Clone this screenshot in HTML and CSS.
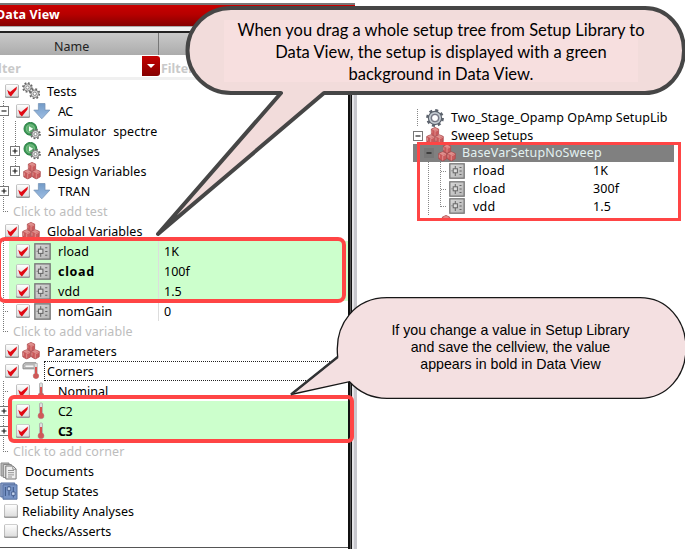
FILE: index.html
```html
<!DOCTYPE html>
<html lang="en">
<head>
<meta charset="utf-8">
<title>Data View</title>
<link rel="stylesheet" href="styles.css">
</head>
<body>
<svg class="defs" width="0" height="0" aria-hidden="true">
  <defs>
    <linearGradient id="box" x2="0" y2="1"><stop stop-color="#fff"/><stop offset="1" stop-color="#ddd"/></linearGradient>
    <linearGradient id="blue" x2="0" y2="1"><stop stop-color="#739bc7"/><stop offset="1" stop-color="#9dbde3"/></linearGradient>
    <linearGradient id="metal" x2="1" y2="1"><stop stop-color="#d8d8d8"/><stop offset="1" stop-color="#b4b4b4"/></linearGradient>
    <symbol id="off" viewBox="0 0 16 16"><rect x="1" y="1.5" width="14" height="13.5" rx="1.5" fill="#999"/><rect x="1.6" y="1.5" width="12.6" height="12" rx="1" fill="url(#box)" stroke="#c0c0c0" stroke-width=".6"/></symbol>
    <symbol id="on" viewBox="0 0 16 16"><use href="#off"/><path d="M3.2 6.7 6.1 9.1 12.9 3.6 12.5 6.4 6.9 13.4 4.6 11.2Z" fill="#e10a14"/></symbol>
    <symbol id="cube" viewBox="0 0 8 9"><path d="M4 .4 7.5 2 7.4 6.7 4 8.6.6 6.7.5 2Z" fill="#c9595b" stroke="#a94a4c" stroke-width=".7"/><path d="M4 .7 7 2.1 4 3.6 1 2.1Z" fill="#df8f8d"/><path d="M4 3.7V8M1.1 3v2.7M4.3 4 7 2.8" stroke="#e59c99" stroke-width=".7" fill="none"/></symbol>
    <symbol id="cubes" viewBox="0 0 18 18"><use href="#cube" x="4.5" y="0" width="9" height="9.800"/><use href="#cube" x="0" y="7.2" width="9.400" height="10.300"/><use href="#cube" x="8.6" y="7.2" width="9.400" height="10.300"/></symbol>
    <symbol id="arrow" viewBox="0 0 18 18"><path d="M5.400 1.500h6.600v6.600h4.900L8.800 16.800.8 8.100H5.400Z" fill="url(#blue)" stroke="#7896b7" stroke-width=".8"/></symbol>
    <symbol id="gear" viewBox="0 0 18 18"><circle cx="9" cy="9" r="7.4" fill="none" stroke="#5c636d" stroke-width="3" stroke-dasharray="2.9 2.91"/><circle cx="9" cy="9" r="5.2" fill="none" stroke="#5c636d" stroke-width="4"/><circle cx="9" cy="9" r="5.2" fill="none" stroke="#c3cad1" stroke-width="1.700"/><circle cx="9" cy="9" r="3.5" fill="#fff" stroke="#667" stroke-width=".9"/></symbol>
    <symbol id="cog" viewBox="0 0 11 11"><circle cx="5.5" cy="5.5" r="4.5" fill="none" stroke="#666" stroke-width="1.7" stroke-dasharray="1.76 1.77"/><circle cx="5.5" cy="5.5" r="3.6" fill="#ddd" stroke="#777" stroke-width=".9"/><circle cx="5.5" cy="5.5" r="1.6" fill="#fff" stroke="#777" stroke-width=".8"/></symbol>
    <symbol id="gears" viewBox="0 0 18 18"><use href="#cog" x="0" y="0" width="11" height="11"/><use href="#cog" x="7" y="6" width="11.5" height="11.5"/></symbol>
    <symbol id="run" viewBox="0 0 18 18"><circle cx="7.4" cy="6.8" r="6.4" fill="#3d9855" stroke="#277e43"/><circle cx="7.4" cy="6.8" r="4.1" fill="#60b071" stroke="#98cfa1" stroke-width=".6"/><path d="M6 4.2v5.3l4.1-2.7Z" fill="#f4fff4"/><use href="#cog" x="7" y="6.6" width="11" height="11"/></symbol>
    <symbol id="var" viewBox="0 0 16 16"><rect x=".8" y=".8" width="14.4" height="14.4" fill="url(#metal)" stroke="#777" stroke-width="1.3"/><path d="M6.3 3v10" stroke="#666"/><rect x="4.200" y="5.8" width="4.200" height="4" fill="#ddd" stroke="#666"/><path d="M10.5 4.5h2M10.5 8h2.2M10.5 11.5h2M2.5 7.8h1" stroke="#666"/></symbol>
    <symbol id="temp" viewBox="0 0 18 18"><path d="M6.500 1.5Q8 .1 9.500 1.5V11Q11.700 13 10.700 15.500 8 18.200 5.300 15.500 4.300 13 6.500 11Z" fill="#ddd" stroke="#aaa" stroke-width=".8"/><path d="M8 5v8" stroke="#d85250" stroke-width="2"/><circle cx="8" cy="13.700" r="2.900" fill="#ce5958"/></symbol>
    <symbol id="corner" viewBox="0 0 18 18"><path d="M1 2.5 3 .8h11v6H1Z" fill="#c5c5c5" stroke="#888"/><path d="M3 3h9v2.5H3Z" fill="#f5f5f5" stroke="#999" stroke-width=".6"/><path d="M12.4 1.5h3v9.7q2 2 .8 4.2-2.2 2.2-4.6 0-1.2-2.2.8-4.2Z" fill="#ddd" stroke="#aaa" stroke-width=".6"/><path d="M14 5v9" stroke="#d85250" stroke-width="2"/><circle cx="14" cy="14" r="2.8" fill="#ce5958"/></symbol>
    <symbol id="docs" viewBox="0 0 18 18"><path d="M1 1h8v13H1Z" fill="#bbb" stroke="#888"/><path d="M3.3 2.5h8v13h-8Z" fill="#ddd" stroke="#888"/><path d="M5.8 4h7.3l3 3v10H5.8Z" fill="#eee" stroke="#777"/><path d="M12.8 4.2V7.3H16M8 8.5h6M8 10.7h6M8 12.9h6M8 15h4" fill="none" stroke="#888" stroke-width=".9"/></symbol>
    <symbol id="states" viewBox="0 0 18 18"><path d="M.8 1h14v14H.8Z" fill="#8fa4cd" stroke="#506b9d"/><path d="M3 2.800h14v14.4H3Z" fill="#7894c6" stroke="#57709f"/><path d="M5.4 5v9M9 4v9.5M13.3 5v10.5" stroke="#375080" stroke-width=".9"/><path d="M7.3 5h3.4v3.4H7.3ZM11.6 10h3.4v3.4h-3.4Z" fill="#c8d7f0" stroke="#3d5687" stroke-width=".8"/></symbol>
    <symbol id="plus" viewBox="0 0 10 10"><rect x=".5" y=".5" width="9" height="9" fill="#fff" stroke="#777"/><path d="M2.5 5h5M5 2.5v5" stroke="#111" stroke-width="1.1"/></symbol>
    <symbol id="minus" viewBox="0 0 10 10"><rect x=".5" y=".5" width="9" height="9" fill="inherit" stroke="#777"/><path d="M2.5 5h5" stroke="#111" stroke-width="1.1"/></symbol>
  </defs>
</svg>
<main class="stage">
  <section class="panel">
    <header class="title">Data View</header>
    <div class="groove"></div>
    <div class="columns"><span class="name">Name</span><span></span></div>
    <div class="filters"><span class="filter-name">Filter</span><span class="drop"></span><span class="filter-value">Filter</span></div>
    <div class="tree">
      <div class="row top"><svg class="check"><use href="#on"/></svg><svg class="icon"><use href="#gears"/></svg><span class="label">Tests</span></div>
      <div class="group">
        <div class="row child"><svg class="expander"><use href="#minus"/></svg><svg class="check"><use href="#on"/></svg><svg class="icon"><use href="#arrow"/></svg><span class="label tight">AC</span></div>
        <div class="row grand leaf"><svg class="icon"><use href="#run"/></svg><span class="label sim">Simulator&nbsp; spectre</span></div>
        <div class="row grand"><svg class="expander"><use href="#plus"/></svg><svg class="icon"><use href="#run"/></svg><span class="label">Analyses</span></div>
        <div class="row grand last"><svg class="expander"><use href="#plus"/></svg><svg class="icon"><use href="#cubes"/></svg><span class="label">Design Variables</span></div>
        <div class="row child"><svg class="expander"><use href="#plus"/></svg><svg class="check"><use href="#on"/></svg><svg class="icon"><use href="#arrow"/></svg><span class="label">TRAN</span></div>
        <div class="row hint">Click to add test</div>
      </div>
      <div class="row top"><svg class="check"><use href="#on"/></svg><svg class="icon"><use href="#cubes"/></svg><span class="label">Global Variables</span></div>
      <div class="group">
        <div class="row child leaf green"><svg class="check"><use href="#on"/></svg><svg class="icon var"><use href="#var"/></svg><span class="label">rload</span><span class="value">1K</span></div>
        <div class="row child leaf green"><svg class="check"><use href="#on"/></svg><svg class="icon var"><use href="#var"/></svg><b class="label wide">cload</b><span class="value">100f</span></div>
        <div class="row child leaf green"><svg class="check"><use href="#on"/></svg><svg class="icon var"><use href="#var"/></svg><span class="label">vdd</span><span class="value">1.5</span></div>
        <div class="row child leaf"><svg class="check"><use href="#on"/></svg><svg class="icon var"><use href="#var"/></svg><span class="label">nomGain</span><span class="value">0</span></div>
        <div class="row hint">Click to add variable</div>
      </div>
      <div class="row top"><svg class="check"><use href="#on"/></svg><svg class="icon"><use href="#cubes"/></svg><span class="label wide">Parameters</span></div>
      <div class="row top focus"><svg class="check"><use href="#on"/></svg><svg class="icon"><use href="#corner"/></svg><span class="label">Corners</span></div>
      <div class="group">
        <div class="row child leaf"><svg class="check"><use href="#on"/></svg><svg class="icon"><use href="#temp"/></svg><span class="label">Nominal</span></div>
        <div class="row child green"><svg class="expander"><use href="#plus"/></svg><svg class="check"><use href="#on"/></svg><svg class="icon"><use href="#temp"/></svg><span class="label tight">C2</span></div>
        <div class="row child green"><svg class="expander"><use href="#plus"/></svg><svg class="check"><use href="#on"/></svg><svg class="icon"><use href="#temp"/></svg><b class="label tight">C3</b></div>
        <div class="row hint">Click to add corner</div>
      </div>
      <div class="row plain"><svg class="icon"><use href="#docs"/></svg><span class="label wide">Documents</span></div>
      <div class="row plain"><svg class="icon"><use href="#states"/></svg><span class="label">Setup States</span></div>
      <div class="row option"><svg class="check"><use href="#off"/></svg><span class="label">Reliability Analyses</span></div>
      <div class="row option"><svg class="check"><use href="#off"/></svg><span class="label">Checks/Asserts</span></div>
    </div>
  </section>

  <section class="library">
    <div class="lib-row root"><svg class="icon"><use href="#gear"/></svg><span>Two_Stage_Opamp OpAmp SetupLib</span></div>
    <div class="lib-row sweep"><svg class="expander"><use href="#minus"/></svg><svg class="icon"><use href="#cubes"/></svg><span>Sweep Setups</span></div>
    <div class="lib-row selected"><svg class="expander"><use href="#minus"/></svg><svg class="icon"><use href="#cubes"/></svg><span>BaseVarSetupNoSweep</span></div>
    <div class="lib-items">
      <div class="lib-row item"><svg class="icon var"><use href="#var"/></svg><span class="key">rload</span><span>1K</span></div>
      <div class="lib-row item"><svg class="icon var"><use href="#var"/></svg><span class="key">cload</span><span>300f</span></div>
      <div class="lib-row item"><svg class="icon var"><use href="#var"/></svg><span class="key">vdd</span><span>1.5</span></div>
    </div>
    <div class="lib-more"><svg><use href="#cubes"/></svg></div>
  </section>

  <div class="mark mark-variables"></div>
  <div class="mark mark-corners"></div>
  <div class="mark mark-library"></div>
  <svg class="balloons" viewBox="0 0 685 549">
    <path d="M231 8H645C667 8 684 27 684 50.500S667 93 645 93H324L158 234 281 93H231C207 93 187.500 74 187.500 50.500S207 8 231 8Z" fill="#f2dcdb" stroke="#464646" stroke-width="4" stroke-linejoin="round"/>
    <path d="M224 20H638V82H224Z" fill="#f7dfdf"/>
    <path d="M387 297.700H640C667 297.700 686 320 686 348S667 398.300 640 398.300H387C372 398.300 359 392 349.500 381.700L291 394.500 337.700 357C334 323 356 297.700 387 297.700Z" fill="#f4e0e1" stroke="#171717" stroke-width="1.300"/>
    <path d="M291 394.500 337.700 357" stroke="#303234" stroke-width="2.300"/>
  </svg>
  <p class="note note-drag">When you drag a whole setup tree from Setup Library to<br>Data View, the setup is displayed with a green<br>background in Data View.</p>
  <p class="note note-save">If you change a value in Setup Library<br>and save the cellview, the value<br>appears in bold in Data View</p>
</main>
</body>
</html>
```
FILE: styles.css
```css
* { box-sizing: border-box; }
body { margin: 0; background: #fff; }
.defs { position: absolute; }
.stage {
  position: relative;
  display: flex;
  width: 685px;
  height: 549px;
  overflow: hidden;
  font: 12.5px/20px "Noto Sans", "Open Sans", sans-serif;
  color: #000;
}
svg { display: block; flex: none; }

.panel {
  flex: none;
  width: 357px;
  height: 549px;
  padding-top: 3px;
  overflow: hidden;
  background: linear-gradient(90deg, transparent 348px, #111 348px 350px, #555 350px 351px, #111 351px 352.500px, #e5e5e8 352.500px 354px, #c8c8ce 354px) 0 31px no-repeat;
}
.title {
  height: 23px;
  width: 355px;
  border-top: 2px solid #777;
  background: linear-gradient(#c90000, #b60000 45%, #850000);
  color: #fff;
  font-weight: bold;
  font-size: 12.500px;
  line-height: 20px;
  letter-spacing: .15px;
  text-indent: -4px;
}
.groove { width: 348px; height: 7px; background: linear-gradient(#aaa 1px, #f1f1f1 1px 5px, #222 5px); }
.columns { display: flex; width: 348px; height: 22px; background: linear-gradient(#c9c9c9, #acacac); line-height: 27px; color: #222; }
.columns .name { width: 159px; border-right: 1px solid #777; padding-left: 54px; }
.filters { display: flex; width: 348px; height: 25px; border-bottom: 3px solid #f0f0f0; color: #c9c9c9; font-weight: bold; line-height: 27px; }
.filter-name { width: 142px; text-indent: -13px; letter-spacing: .2px; }
.drop { width: 18px; height: 20px; margin-top: 1px; border-radius: 0 3px 3px 0; background: linear-gradient(#c50000, #850000); }
.drop::after { content: ""; display: block; margin: 8px 0 0 5px; width: 0; border: 4px solid transparent; border-top-color: #fff; border-bottom: 0; }
.filter-value { padding-left: 1px; }

.tree { width: 348px; height: 468px; padding-top: 1px; border-bottom: 1px solid #555; }
.row { display: flex; align-items: center; height: 20px; line-height: 21px; }
.icon { width: 18px; height: 18px; }
.check { width: 16px; height: 16px; }
.expander { width: 10px; height: 10px; fill: #fff; }
.label { padding-top: 1px; letter-spacing: .05px; }
.wide { letter-spacing: .2px; }
.sim { letter-spacing: .15px; }
b.wide { letter-spacing: .7px; }
.tight { letter-spacing: -.5px; }
.top { padding-left: 4px; }
.top .icon { margin: 0 7px 0 2px; }
.group { background: repeating-linear-gradient(#777 0 1px, transparent 1px 2px) 3px 0 / 1px calc(100% - 9px) no-repeat; }
.child { padding-left: 15px; }
.child > .expander { margin: 0 6px 0 -16px; }
.child > .expander + .check { margin-left: 0; }
.child .icon { margin: 0 7px 0 2px; }
.child .icon.var { margin: 0 7px 0 3px; width: 17px; height: 17px; }
.child .label { width: 100px; flex: none; }
.value { align-self: stretch; padding: 1px 0 0 5px; border-left: 1px solid #ddd; line-height: 20px; }
.child.leaf { background: repeating-linear-gradient(90deg, #777 0 1px, transparent 1px 2px) 3px 10px / 5px 1px no-repeat; }
.green, .child.leaf.green { background: linear-gradient(90deg, transparent 9px, #cfc 9px); }
.grand { padding-left: 23px; background: repeating-linear-gradient(#777 0 1px, transparent 1px 2px) 15px 0 / 1px 100% no-repeat; }
.grand.last { background-size: 1px 10px; }
.grand .expander { margin: 0 3px 0 -13px; }
.grand .icon { margin-right: 7px; }
.hint { padding: 1px 0 0 13px; color: #bdbdbd; letter-spacing: .08px; background: repeating-linear-gradient(90deg, #777 0 1px, transparent 1px 2px) 3px 10px / 5px 1px no-repeat; }
.focus .label { height: 20px; width: 304px; margin-left: -3px; padding: 0 0 0 2px; line-height: 19px; border: 1px dotted #222; border-right: 0; }
.plain .icon { margin: 0 7px 0 0; }
.option { padding-left: 3px; }
.option .check { margin-right: 3px; }

.library { margin: 109px 0 0 56px; width: 262px; font-size: 12.500px; letter-spacing: .06px; }
.lib-row { display: flex; align-items: center; height: 17.700px; line-height: 18px; }
.root { padding-left: 13px; background: repeating-linear-gradient(#888 0 1px, transparent 1px 2px) 4px 0 / 1px 100% no-repeat; }
.root .icon { margin-right: 7px; }
.sweep .icon { margin: 0 7px 0 3px; }
.selected { width: 261px; padding-left: 11px; background: #808080; color: #e2f1f0; letter-spacing: .15px; }
.selected .expander { fill: #777; }
.selected .icon { margin: 0 6px 0 4px; }
.lib-items { background: repeating-linear-gradient(#888 0 1px, transparent 1px 2px) 15px 0 / 1px 100% no-repeat, repeating-linear-gradient(#888 0 1px, transparent 1px 2px) 27px 0 / 1px calc(100% - 8px) no-repeat; }
.item { padding-left: 36px; letter-spacing: .1px; background: repeating-linear-gradient(90deg, #888 0 1px, transparent 1px 2px) 28px 9px / 6px 1px no-repeat; }
.item .icon { width: 16px; height: 16px; }
.item span { padding-top: 1px; }
.item .key { margin-left: 8px; width: 120px; letter-spacing: .25px; }
.lib-more { height: 3px; padding-left: 24px; overflow: hidden; }
.lib-more svg { width: 18px; height: 18px; }

.mark { position: absolute; border: 4px solid #ff4545; }
.mark-variables { left: -3px; top: 237px; width: 349px; height: 66px; border-radius: 8px; }
.mark-corners { left: 8px; top: 395px; width: 346px; height: 48px; border-radius: 6px; }
.mark-library { left: 417px; top: 142px; width: 264px; height: 79px; border-width: 3px; }
.balloons { position: absolute; left: 0; top: 0; width: 685px; height: 549px; }
.note { position: absolute; margin: 0; text-align: center; white-space: nowrap; }
.note-drag { left: 191px; top: 19px; width: 500px; font: 16.500px/22px Lato, sans-serif; }
.note-save { left: 360px; top: 322px; width: 301px; font: 14.200px/17px "Liberation Sans", sans-serif; }
```
